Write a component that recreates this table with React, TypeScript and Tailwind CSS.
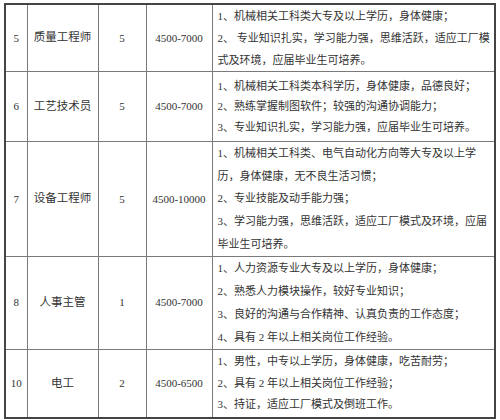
const ROWS = [
  {
    no: "5",
    title: "质量工程师",
    count: "5",
    salary: "4500-7000",
    h: "h-[67px]",
    lead: "leading-[22px]",
    lines: [
      "1、机械相关工科类大专及以上学历，身体健康；",
      "2、 专业知识扎实，学习能力强，思维活跃，适应工厂模",
      "式及环境，应届毕业生可培养。",
    ],
  },
  {
    no: "6",
    title: "工艺技术员",
    count: "5",
    salary: "4500-7000",
    h: "h-[70px]",
    lead: "leading-[20.5px]",
    lines: [
      "1、机械相关工科类本科学历，身体健康，品德良好；",
      "2、熟练掌握制图软件；较强的沟通协调能力；",
      "3、专业知识扎实，学习能力强，应届毕业生可培养。",
    ],
  },
  {
    no: "7",
    title: "设备工程师",
    count: "5",
    salary: "4500-10000",
    h: "h-[113px]",
    lead: "leading-[22.7px]",
    lines: [
      "1、机械相关工科类、电气自动化方向等大专及以上学",
      "历，身体健康，无不良生活习惯；",
      "2、专业技能及动手能力强；",
      "3、学习能力强，思维活跃，适应工厂模式及环境，应届",
      "毕业生可培养。",
    ],
  },
  {
    no: "8",
    title: "人事主管",
    count: "1",
    salary: "4500-7000",
    h: "h-[92px]",
    lead: "leading-[23px]",
    lines: [
      "1、人力资源专业大专及以上学历，身体健康；",
      "2、熟悉人力模块操作，较好专业知识；",
      "3、良好的沟通与合作精神、认真负责的工作态度；",
      "4、具有 2 年以上相关岗位工作经验。",
    ],
  },
  {
    no: "10",
    title: "电工",
    count: "2",
    salary: "4500-6500",
    h: "h-[69px]",
    lead: "leading-[21.5px]",
    lines: [
      "1、男性，中专以上学历，身体健康，吃苦耐劳；",
      "2、具有 2 年以上相关岗位工作经验；",
      "3、持证，适应工厂模式及倒班工作。",
    ],
  },
];

export default function App() {
  return (
    <div className="w-[500px] h-[420px] bg-white pt-[3px] pl-[4px] text-[11px] text-[#333] font-['Liberation_Serif','Noto_Sans_CJK_SC',serif]">
      <table className="table-fixed border-collapse border-2 border-[#444] w-[490px]">
        <colgroup>
          <col className="w-[22px]" />
          <col className="w-[71px]" />
          <col className="w-[48px]" />
          <col className="w-[66px]" />
          <col className="w-[283px]" />
        </colgroup>
        <tbody>
          {ROWS.map((r) => (
            <tr key={r.no} className={r.h}>
              <td className="border border-[#7a7a7a] text-center align-middle p-0">{r.no}</td>
              <td className="border border-[#7a7a7a] text-center align-middle p-0 text-[11.5px]">{r.title}</td>
              <td className="border border-[#7a7a7a] text-center align-middle p-0">{r.count}</td>
              <td className="border border-[#7a7a7a] text-center align-middle p-0 whitespace-nowrap">{r.salary}</td>
              <td className={`border border-[#7a7a7a] align-middle pl-[5px] pr-0 py-0 ${r.lead}`}>
                {r.lines.map((line, i) => (
                  <div key={i} className="whitespace-nowrap">
                    {line}
                  </div>
                ))}
              </td>
            </tr>
          ))}
        </tbody>
      </table>
    </div>
  );
}
